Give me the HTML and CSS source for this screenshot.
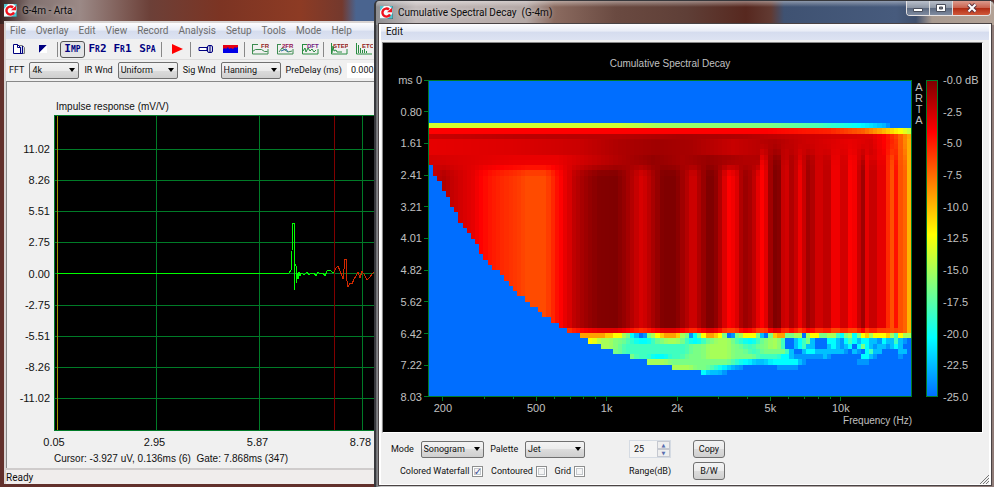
FILE: index.html
```
<!DOCTYPE html>
<html lang="en">
<head>
<meta charset="utf-8">
<title>Arta</title>
<link rel="stylesheet" href="styles.css">
</head>
<body>
<svg class="defs" aria-hidden="true">
  <symbol id="logo" viewBox="0 0 13 13">
    <rect width="13" height="13" fill="#f4fbfc"/>
    <path d="M0 0h4L0 5zM13 7v6H7zM9 0h4v3z" fill="#50c4cf"/>
    <path d="M13 0v13H0" fill="none" stroke="#39656c"/>
    <path d="M10 8.400A4 4 0 1 1 9 3.500" fill="none" stroke="#f0101c" stroke-width="2.400"/>
    <path d="M7 6.300h5V1.800z" fill="#f0101c"/>
  </symbol>
</svg>
<main class="desktop">

  <section class="window main-window">
    <header class="titlebar"><svg class="logo"><use href="#logo"/></svg><h1>G-4m - Arta</h1></header>
    <div class="client">
      <nav class="menu">
        <a href="#">File</a><a href="#">Overlay</a><a href="#">Edit</a><a href="#">View</a><a href="#">Record</a><a href="#">Analysis</a><a href="#">Setup</a><a href="#">Tools</a><a href="#">Mode</a><a href="#">Help</a>
      </nav>
      <div class="toolbar">
        <button aria-label="Copy"><svg viewBox="0 0 18 14"><path d="M7.500 3.500h5l2 2v6h-6" fill="#d5dcec" stroke="#777"/><path d="M3.500 2.500h4l3 3v6h-7z" fill="#fff" stroke="#000080"/><path d="M7.500 2.500v3h3M12.500 4v7.500H9" fill="none" stroke="#000080"/></svg></button>
        <button aria-label="Black and white"><svg viewBox="0 0 18 14"><path d="M4 3h8l-8 8z" fill="#000080"/><path d="M12 3v8H4z" fill="#fff"/></svg></button>
        <i class="sep"></i>
        <button class="mode pressed">Imp</button><button class="mode">Fr2</button><button class="mode">Fr1</button><button class="mode">Spa</button>
        <i class="sep"></i>
        <button aria-label="Record"><svg viewBox="0 0 18 14"><path d="M4 2l11 5-11 5z" fill="#f00"/></svg></button>
        <i class="sep"></i>
        <button aria-label="Calibrate"><svg viewBox="0 0 18 14"><path d="M2 5.500h8v3H2z" fill="#fff" stroke="#000080"/><rect x="10.500" y="3.500" width="5" height="7" rx="1.500" fill="#d8d8e8" stroke="#000080"/><path d="M13 4v6" stroke="#000080"/></svg></button>
        <button aria-label="Generator"><svg viewBox="0 0 18 14"><path d="M1 3h15v8H1z" fill="#e60012"/><path d="M1 11V7l2-1 1 1 2-2 1 2 2-1 2 1 2-2 1 1 2-1v6z" fill="#0000e6"/></svg></button>
        <i class="sep"></i>
        <button aria-label="FR"><svg viewBox="0 0 18 14"><path d="M1.500 2v10H17V7M1.500 9.500l3-2 6 0 3 2 3 0M1 2.500h6" fill="none" stroke="#3c8c50"/><text x="10" y="6" fill="#902020">FR</text></svg></button>
        <button aria-label="2FR"><svg viewBox="0 0 18 14"><path d="M1.500 2v10H17V7M3 10l3-4 6 4 4-1M1 2.500h4" fill="none" stroke="#3c8c50"/><path d="M5 9l5-2 2 3" fill="none" stroke="#2869a0"/><text x="6" y="6" fill="#901050">2FR</text></svg></button>
        <button aria-label="DFT"><svg viewBox="0 0 18 14"><path d="M1.500 2v10H17V7M2 9l2-3 1 4 2-4 2 3 2-2 2 3 2-2M1 2.500h5" fill="none" stroke="#288c40"/><text x="6" y="6" fill="#702080">DFT</text></svg></button>
        <i class="sep"></i>
        <button aria-label="STEP"><svg viewBox="0 0 18 14"><path d="M1.500 1v11H17V7M2 11l1-7 1 5 2-1 1 2h5" fill="none" stroke="#288c40"/><text x="3" y="6" fill="#902020">STEP</text></svg></button>
        <button aria-label="ETC"><svg viewBox="0 0 18 14"><path d="M1.500 1v11H17M3.500 11V3M5.500 11V6M7.500 11V8M9.500 11V7M11.500 11V9" fill="none" stroke="#288c40"/><text x="7" y="6" fill="#902020">ETC</text></svg></button>
      </div>
      <form class="settings">
        <label for="fft">FFT</label><span class="pick w50"><select id="fft"><option>4k</option></select></span>
        <label for="irwnd">IR Wnd</label><span class="pick w60"><select id="irwnd"><option>Uniform</option></select></span>
        <label for="sigwnd">Sig Wnd</label><span class="pick w60"><select id="sigwnd"><option>Hanning</option></select></span>
        <label for="predelay">PreDelay (ms)</label><input id="predelay" type="text" value="0.000">
      </form>
      <div class="impulse">
        <h2>Impulse response (mV/V)</h2>
        <div class="impulse-y"><span>11.02</span><span>8.26</span><span>5.51</span><span>2.75</span><span>0.00</span><span>-2.75</span><span>-5.51</span><span>-8.26</span><span>-11.02</span></div>
        <svg class="impulse-plot">
          <path class="grid" d="M0 33h900M0 64h900M0 95h900M0 126h900M0 157h900M0 189h900M0 220h900M0 251h900M0 282h900M101 0v320M204 0v320M307 0v320"/>
          <path d="M2 0v320" class="cursor"/><path d="M279 0v320" class="gate"/>
          <path class="trace" d="M2 157H234L236 154L237 135L238 107L239 107L239 174L240 148L241 150L241 167L242 157L243 163L244 156L245 160L246 157L248 158L250 158L252 156L254 159L256 157L259 157L261 160L263 156L265 158L268 157L270 160L272 155L275 154L277 156L279 156"/>
          <path class="late" d="M279 156L281 152L283 150L285 155L287 160L288 163L290 143L291 143L292 165L293 171L295 167L297 168L299 163L301 160L303 156L305 162L307 155L310 160L312 164L315 161L318 157L324 156L330 160L340 157"/>
        </svg>
        <div class="impulse-x"><span>0.05</span><span>2.95</span><span>5.87</span><span>8.78</span></div>
        <p>Cursor: -3.927 uV, 0.136ms (6)&nbsp; Gate: 7.868ms (347)</p>
      </div>
      <footer class="status">Ready</footer>
    </div>
  </section>

  <section class="window decay-window">
    <header class="titlebar"><svg class="logo"><use href="#logo"/></svg><h1>Cumulative Spectral Decay&nbsp; (G-4m)</h1>
      <div class="caption">
        <button aria-label="Minimize"><svg viewBox="0 0 12 10"><path d="M1.500 5.500h9v3h-9z" fill="#fff" stroke="#4a4f5c"/></svg></button>
        <button aria-label="Maximize"><svg viewBox="0 0 12 10"><path d="M1.500 1.500h9v7h-9z" fill="#fff" stroke="#4a4f5c"/><path d="M4.500 4h3v2h-3z" fill="#777" stroke="#4a4f5c"/></svg></button>
        <button class="close" aria-label="Close"><svg viewBox="0 0 12 10"><path d="M2.500 1.500l7 7M9.500 1.500l-7 7" stroke="#5c3540" stroke-width="4"/><path d="M2.500 1.500l7 7M9.500 1.500l-7 7" stroke="#fff" stroke-width="2"/></svg></button>
      </div>
    </header>
    <div class="client">
      <nav class="menu"><a href="#">Edit</a></nav>
      <div class="sonogram">
        <h2>Cumulative Spectral Decay</h2>
        <div class="scale time"><span>ms 0</span><span>0.80</span><span>1.61</span><span>2.41</span><span>3.21</span><span>4.01</span><span>4.82</span><span>5.62</span><span>6.42</span><span>7.22</span><span>8.03</span></div>
        <canvas id="map" width="115" height="60"></canvas>
        <div class="brand"><span>A</span><span>R</span><span>T</span><span>A</span></div>
        <div class="colorbar"></div>
        <div class="scale level"><span>-0.0 dB</span><span>-2.5</span><span>-5.0</span><span>-7.5</span><span>-10.0</span><span>-12.5</span><span>-15.0</span><span>-17.5</span><span>-20.0</span><span>-22.5</span><span>-25.0</span></div>
        <svg id="freq" class="freq"></svg>
        <p>Frequency (Hz)</p>
      </div>
      <form class="controls">
        <div class="options">
          <div class="line"><label for="mode">Mode</label><span class="pick w63"><select id="mode"><option>Sonogram</option></select></span>
          <label for="palette">Palette</label><span class="pick w60"><select id="palette"><option>Jet</option></select></span></div>
          <div class="line second"><label>Colored Waterfall <input type="checkbox" checked></label><label>Contoured <input type="checkbox"></label><label>Grid <input type="checkbox"></label></div>
        </div>
        <div class="range">
          <span class="spin"><input id="range" type="text" value="25"><button type="button" aria-label="Increase">▲</button><button type="button" aria-label="Decrease">▼</button></span>
          <label for="range">Range(dB)</label>
        </div>
        <div class="actions"><button type="button">Copy</button><button type="button">B/W</button></div>
        <svg class="grip" viewBox="0 0 9 9"><path d="M0 9l9-9M3 9l6-6M6 9l3-3" stroke="#777"/></svg>
      </form>
    </div>
  </section>
</main>
<script src="sonogram.js"></script>
</body>
</html>
```
FILE: styles.css
```
* { box-sizing: border-box; }
body { margin: 0; font: 10px/12px Roboto, "Open Sans", sans-serif; color: #111; }
h1, h2, p { margin: 0; font-weight: 400; }
a { color: inherit; text-decoration: none; }
button, input, select { font: inherit; color: inherit; margin: 0; }
.defs { display: block; width: 0; height: 0; }

.desktop { position: relative; height: 100vh; overflow: hidden; background: #5c2d29; }
.window { position: absolute; display: flex; flex-direction: column; }
.main-window {
  inset: 0 30% 0 0; padding: 0 0 3px 4px;
  background: linear-gradient(90deg, #38201f, #80706e 30px, #9b8986 80px, #6c4038 150px, #7c3423 220px, #8d3b24 300px, #74392d 342px, #4a648f 356px) 0 0 / 100% 24px no-repeat, #62302b;
}
.decay-window {
  inset: 0 0 0 374px; padding: 0 3px 2px 3px; border: solid #37383c; border-width: 1px 0 0 2px; border-radius: 5px 5px 0 0;
  background: linear-gradient(#fff6, #fff0 6px) 0 0 / 100% 22px no-repeat,
    linear-gradient(90deg, #8d8d90, #c3bbbb 40px, #b3a7a4 150px, #8b6b60 178px, #6a4a41 240px, #5f3f37 310px, #57281f 370px, #613a32 395px, #3f5272 408px, #475b7d 520px, #3f4f6c 540px, #a89a90 556px, #b3a296) 0 0 / 100% 24px no-repeat,
    linear-gradient(90deg, #65666a, #c9c9c9 5px, #c9c9c9 50%, #8f7c78);
}
.titlebar { display: flex; align-items: center; gap: 5px; height: 23px; flex: none; }
.titlebar h1 { font-size: 10px; line-height: 14px; color: #0b0b0b; text-shadow: 0 0 5px #fff8; flex: 1; }
.main-window .titlebar { height: 21px; }
.decay-window .titlebar { padding-left: 1px; }
.logo { width: 13px; height: 13px; }
.main-window .client { border-top: 2px solid #d9d4d3; border-left: 2px solid #d9d4d3; }
.client { display: flex; flex-direction: column; flex: 1; min-height: 0; background: #f0f0f0; }
.decay-window .client { border: solid #fff; border-width: 0 2px 1px; outline: 1px solid #4a4344; }

.caption { align-self: flex-start; display: flex; border: 1px solid #e6e2e2; border-top: 0; border-radius: 0 0 4px 4px; overflow: hidden; }
.caption button { display: grid; place-items: center; width: 23px; height: 14px; padding: 0; border: 0; border-right: 1px solid #ddd; background: linear-gradient(#b9c0cb, #8b94a3 50%, #5b687e 50%, #7f8ba0); }
.caption svg { width: 12px; height: 10px; }
.caption .close { width: 37px; border-right: 0; background: linear-gradient(#dc9a8c, #c8604c 50%, #b02a12 50%, #d0583a); }

.menu { display: flex; flex: none; background: linear-gradient(#fdfdff, #e8ecf6 45%, #d5dcee 50%, #dde3f2); }
.main-window .menu { height: 16px; gap: 10px; padding: 2px 4px; color: #6d6d6d; }
.decay-window .menu { height: 16px; padding: 2px 5px; color: #111; }

.toolbar { display: flex; align-items: center; height: 20px; flex: none; background: #f0f0f0; }
.toolbar button { display: grid; place-items: center; flex: none; width: 25px; height: 17px; padding: 0; border: 1px solid transparent; border-radius: 3px; background: none; }
.toolbar button svg { width: 18px; height: 14px; }
.toolbar text { font: bold 6px/6px "Liberation Sans", sans-serif; }
.toolbar .mode { font: 11px/14px "DejaVu Sans Mono", monospace; font-weight: 700; font-variant: small-caps; color: #000080; }
.toolbar .pressed { border-color: #555; background: #e3e3e5; }
.sep { flex: none; width: 1px; height: 15px; margin: 0 2px 0 1px; background: #888; }

.settings { display: flex; align-items: center; gap: 5px; height: 21px; padding: 0 3px; flex: none; border-top: 1px solid #ddd; white-space: nowrap; }
.settings input { width: 60px; height: 15px; padding: 0 4px; border: 0; background: #fff; }
.pick { display: grid; align-items: center; flex: none; height: 17px; }
.pick > select, .pick::after { grid-area: 1 / 1; }
.pick::after { content: ""; justify-self: end; margin-right: 4px; border: 3px solid transparent; border-top: 4px solid #000; border-bottom: 0; pointer-events: none; }
select { appearance: none; width: 100%; height: 17px; padding: 0 2px; border: 1px solid #707070; border-radius: 2px; background: linear-gradient(#f3f3f3, #ebebeb 50%, #dcdcdc 50%, #cfcfcf); }
.w50 { width: 50px; } .w60 { width: 60px; } .w63 { width: 63px; }

.impulse { flex: 1; min-height: 0; display: grid; grid-template: 33px 1fr 20px 17px / 47px 1fr; margin-top: 1px; border: solid #888; border-width: 1px 0 0 1px; font: 11px/14px "Liberation Sans", sans-serif; }
.impulse h2 { grid-area: 1 / 2; align-self: end; font-size: 10px; padding: 0 0 1px 2px; }
.impulse-y { grid-area: 2 / 1; display: flex; flex-direction: column; justify-content: space-between; align-items: flex-end; padding: 27px 4px 26px; }
.impulse-plot { grid-area: 2 / 2; width: 100%; height: 100%; background: #000; border: solid #007b27; border-width: 1px 0 1px 1px; }
.impulse-plot path { fill: none; stroke-width: 1px; shape-rendering: crispEdges; }
.grid { stroke: #007b27; }
.impulse-plot .cursor { stroke: #a09000; }
.impulse-plot .gate { stroke: #800000; }
.impulse-plot .trace { stroke: #0f0; }
.impulse-plot .late { stroke: #d02800; }
.impulse-x { grid-area: 3 / 1 / 4 / 3; display: flex; padding-top: 4px; margin-left: -2px; }
.impulse-x span { flex: 0 0 103px; text-align: center; }
.impulse-x span:first-child { flex-basis: 98px; }
.impulse p { grid-area: 4 / 2; font-size: 10px; padding-top: 1px; }
.status { flex: none; height: 16px; padding: 2px 0 0; border-top: 2px solid #cfcccc; background: #f0edec; line-height: 12px; }

.sonogram { flex: 1; min-height: 0; display: grid; grid-template: 37px 1fr 22px 13px / 45px 1fr 14px 12px 44px; margin: 2px 6px 0 1px; border: 1px solid #888; border-right-color: #fff; border-bottom-color: #fff; background: #000; color: #c0c0c0; font: 11px/14px "Liberation Sans", sans-serif; }
.sonogram h2 { grid-area: 1 / 2; font-size: 10px; text-align: center; padding-top: 14px; }
.scale { display: flex; flex-direction: column; justify-content: space-between; margin: -7px 0; }
.time { grid-area: 2 / 1; align-items: flex-end; }
.time span { display: flex; align-items: center; gap: 2px; }
.time span::after { content: ""; width: 4px; height: 1px; background: #007b27; }
.level { grid-area: 2 / 5; padding-left: 5px; white-space: nowrap; }
#map { grid-area: 2 / 2; width: 100%; height: 100%; image-rendering: pixelated; border: 1px solid #007b27; min-height: 0; }
.brand { grid-area: 2 / 3; display: flex; flex-direction: column; align-items: center; line-height: 11px; padding-top: 2px; }
.colorbar { grid-area: 2 / 4; border: 1px solid #007b27; background: linear-gradient(#800000, #f00 16.200%, #ff0 48.800%, #0ff 81.500%, #006eff); }
.freq { grid-area: 3 / 2; width: 100%; height: 22px; overflow: visible; }
.freq text { fill: #c0c0c0; text-anchor: middle; }
.freq line { stroke: #007b27; shape-rendering: crispEdges; }
.sonogram p { grid-area: 4 / 2; text-align: right; font-size: 10px; line-height: 11px; margin-top: -4px; }

.controls { display: grid; grid-template-columns: 216px 42px 32px 1fr; column-gap: 22px; height: 51px; flex: none; padding: 7px 0 0 10px; white-space: nowrap; }
.settings, .controls { font-size: 9px; }
.options, .range, .actions { display: flex; flex-direction: column; gap: 4px; }
.options { padding-right: 22px; }
.range { align-items: center; }
.line { display: flex; align-items: center; justify-content: space-between; height: 18px; }
.second { padding-left: 9px; }
.second label { display: flex; align-items: center; gap: 3px; }
input[type=checkbox] { appearance: none; display: grid; place-items: center; width: 11px; height: 11px; border: 1px solid #8e8f8f; background: #f4f4f4; box-shadow: inset 0 0 0 1px #fff, inset 0 0 0 2px #c4c8cc; }
input[type=checkbox]:checked::before { content: "✓"; font: bold 10px/9px "DejaVu Sans", sans-serif; color: #3a4f95; }
.spin { display: grid; grid-template: 8px 8px / 1fr 13px; width: 42px; border: 1px solid #d5dbe3; height: 18px; }
.spin input { grid-area: 1 / 1 / 3 / 2; min-width: 0; height: 16px; padding: 0 4px; border: 0; background: #f4f4f4; }
.spin button { padding: 0; border: 1px solid #c5c8d0; background: #eee; color: #5a6fb0; font: 5px/5px "DejaVu Sans", sans-serif; height: 8px; }
.range label { line-height: 18px; }
.actions button { height: 18px; padding: 0; border: 1px solid #707070; border-radius: 3px; background: linear-gradient(#f3f3f3, #ebebeb 50%, #dcdcdc 50%, #cfcfcf); }
.grip { width: 9px; height: 9px; place-self: end; }
```
FILE: sonogram.js
```
// Levels are palette steps: 0 is the loudest (dark red), 782 the floor (blue).
const FLOOR = 782, COLS = 115, ROWS = 60;

function jet(v) {
  v = Math.max(0, Math.min(FLOOR, v));
  if (v < 127) return [128 + v, 0, 0];
  if (v < 382) return [255, v - 127, 0];
  if (v < 637) return [637 - v, 255, v - 382];
  return [0, 255 - (v - 637), 255];
}

// Linear interpolation over [x, level, x, level, ...]
function curve(p, x) {
  if (x <= p[0]) return p[1];
  for (let i = 2; i < p.length; i += 2)
    if (x <= p[i]) return p[i - 1] + (p[i + 1] - p[i - 1]) * (x - p[i - 2]) / (p[i] - p[i - 2]);
  return p[p.length - 1];
}

const low = [0,72, 3,50, 5,68, 8,90, 10,102, 12,127, 14,147, 17,167, 21,187, 23,202, 27,202, 28,187, 29,165, 30,142, 31,127, 32,105, 33,88, 34,64, 36,40, 38,20, 40,4, 44,0, 46,22, 48,52, 50,88, 51,78, 52,60, 53,40, 54,22, 55,4];
const high = [0,0,0,12,32,52,76,76,48,24,0,0,16,48,92,127,115,92,48,28,40,64,102,127,96,32,0,8,72,82,48,72,112,72,32,48,82,82,64,64,112,112,82,82,127,117,72,32,102,72,72,102,102,167,207,143,207,227,307];
const body = k => k < 56 ? curve(low, k) : high[k - 56];

const early = {
  8: [0,425, 45,432, 55,475, 80,510, 92,560, 101,625, 105,665, 108,710, 110,782],
  9: [0,127, 80,127, 95,160, 103,220, 107,290, 112,385, 114,440],
  10: [0,72, 20,60, 45,55, 60,40, 75,50, 92,80, 105,95, 108,127, 111,190, 114,290],
  12: [0,102, 20,92, 35,75, 45,45, 54,32, 62,40, 72,72, 82,48, 88,72, 100,105, 105,88, 108,127, 111,180, 114,300],
  15: [0,85, 20,105, 30,105, 38,75, 45,48, 53,20, 60,40, 66,24, 75,50, 85,48, 100,105, 108,130, 111,190, 114,300]
};

const edge = [16,18,19,21,22,24,25,27,28,29,30,31,33,34,35,36,36,37,38,39,40,41,41,42,43,43,44,45,45,46,46,47,47,48,48,48,49,49,50,50,50,51,51,51,52,52,52,52,53,53,53,53,54,54,54,54,54,54,55,55,55,55,55,55,55];

const step = { o: 287, q: 330, y: 382, l: 470, g: 515, t: 574, c: 637, s: 700, a: 742, b: FLOOR };
// First column, then one letter for each column
const tail = {
  48: [36, "ooooooqqyylgcsbaglyqoooqlgacgyooqygbaglyyygsbgqooggllblyygglltcglcgyqlyyyqltyllt"],
  49: [38, "yyllllgggttcccctggllllgtccctggllllgttccctggllltbbsctgsbbbccsactcsccssacsstsab"],
  50: [41, "lllggttttttttttttttttggggllllllgggtttggglllltbbsctssbbbscsascbcgcsassascsbb".replace("gggllllt", "ggglllt")],
  51: [44, "ggttttttttttttttttggggllllllggggtttggggggtsbbsccsssssssabsabctssbbbbssbb"],
  52: [48, "gttttccccttttgggggllllllggggggttttttccsaaaaaaasabbbbbbbccsabbbbba"],
  53: [52, "lllllgggggggggggggggttcccsssscccccccsabbbbbbbbbbbbaaabbbbbbbbbb"],
  54: [58, "lllllggggttccssaabbbbbbbbaaaaa"],
  55: [65, "cssssa"]
};

function tailAt(r, k) {
  const t = tail[r];
  return t ? step[t[1][k - t[0]]] ?? FLOOR : FLOOR;
}

function level(r, k) {
  if (r < 8 || (k < edge.length && r >= edge[k])) return FLOOR;
  if (r >= 48) {
    const v = tailAt(r, k), a = tailAt(r, k - 1), b = tailAt(r, k + 1);
    return r > 48 && k < 84 && a < FLOOR && b < FLOOR ? (a + 2 * v + b) / 4 : v;
  }
  const m = body(k);
  if (r === 47) return Math.min(96 + 0.9 * m, Math.max(m, 195));
  if (r <= 10) return curve(early[r], k);
  if (r > 17) return m;
  const a = curve(early[r < 14 ? 12 : 15], k);
  const w = k > 78 ? [0, 0.1, 0.3, 0.6, 0.8, 0.9, 1][r - 11] : [0, 0, 0, 0, 0.05, 0.4, 0.85][r - 11];
  return a + (m - a) * w;
}

const ctx = document.getElementById("map").getContext("2d");
for (let r = 0; r < ROWS; r++)
  for (let k = 0; k < COLS; k++) {
    ctx.fillStyle = `rgb(${jet(level(r, k)).map(Math.round).join(",")})`;
    ctx.fillRect(k, r, 1, 1);
  }

// Logarithmic frequency axis
const freq = document.getElementById("freq");
const names = { 200: "200", 500: "500", 1000: "1k", 2000: "2k", 5000: "5k", 10000: "10k" };
function add(tag, attrs, text) {
  const el = document.createElementNS("http://www.w3.org/2000/svg", tag);
  for (const a in attrs) el.setAttribute(a, attrs[a]);
  if (text) el.textContent = text;
  freq.append(el);
}
for (const d of [100, 1000, 10000])
  for (let n = 1; n < 10; n++) {
    const f = d * n;
    if (f < 200 || f > 10000) continue;
    const x = 36.9 + 48.4 * Math.log10(f / 1000) + "%";
    add("line", { x1: x, x2: x, y1: 0, y2: names[f] ? 4 : 2 });
    if (names[f]) add("text", { x, y: 15 }, names[f]);
  }
```
